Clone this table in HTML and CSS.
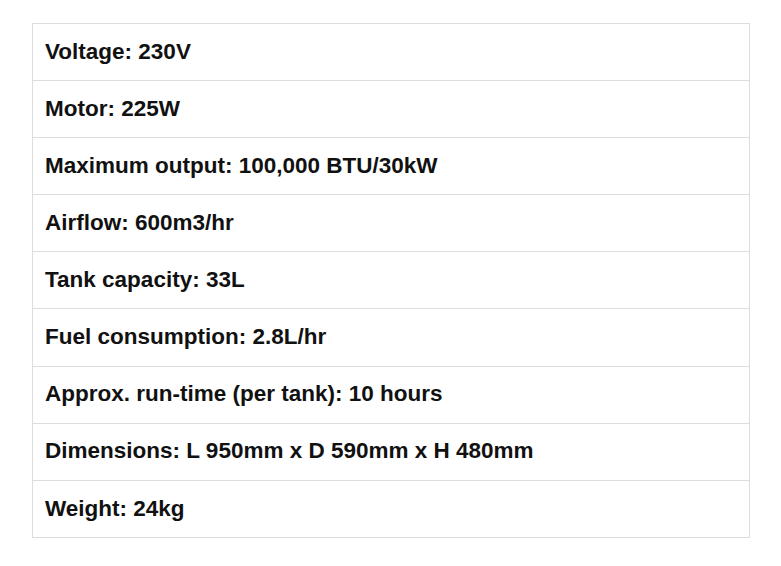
FILE: index.html
```html
<!DOCTYPE html>
<html>
<head>
<meta charset="utf-8">
<link rel="stylesheet" href="styles.css">
</head>
<body>
<table class="specs">
<tbody>
<tr><td>Voltage: 230V</td></tr>
<tr><td>Motor: 225W</td></tr>
<tr><td>Maximum output: 100,000 BTU/30kW</td></tr>
<tr><td>Airflow: 600m3/hr</td></tr>
<tr><td>Tank capacity: 33L</td></tr>
<tr><td>Fuel consumption: 2.8L/hr</td></tr>
<tr><td>Approx. run-time (per tank): 10 hours</td></tr>
<tr><td>Dimensions: L 950mm x D 590mm x H 480mm</td></tr>
<tr><td>Weight: 24kg</td></tr>
</tbody>
</table>
</body>
</html>
```
FILE: styles.css
```css
html, body {
  margin: 0;
  padding: 0;
  background: #fff;
}
body {
  padding: 23px 0 0 32px;
  font-family: "Liberation Sans", Arial, sans-serif;
}
.specs {
  border-collapse: collapse;
  width: 718px;
}
.specs td {
  border: 1px solid #dddddd;
  padding: 14.75px 12px;
  line-height: 26.6px;
  font-size: 22.5px;
  font-weight: bold;
  color: #111;
}
```
